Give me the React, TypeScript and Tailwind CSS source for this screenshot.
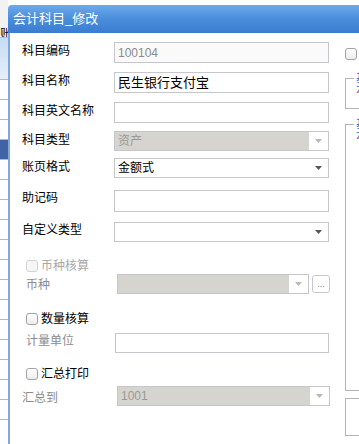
import type { ReactNode } from "react";

const font = { fontFamily: '"Liberation Sans","Noto Sans CJK SC",sans-serif' };

function Arrow({ disabled }: { disabled?: boolean }) {
  return (
    <div className="flex w-[19px] items-center justify-center bg-white">
      <svg width="7" height="4" viewBox="0 0 7 4">
        <path d="M0 0h7L3.5 4z" fill={disabled ? "#b8b8b8" : "#555"} />
      </svg>
    </div>
  );
}

function TextBox({ value, disabled, className = "h-[21px]" }: { value?: string; disabled?: boolean; className?: string }) {
  return (
    <div
      className={`flex items-center border border-[#c6c6ce] px-[3px] text-[12px] ${className} ${
        disabled ? "bg-[#fafafa] text-[#8a8a8a]" : "bg-white text-black"
      }`}
    >
      {value}
    </div>
  );
}

function Select({ value, disabled, className = "" }: { value?: string; disabled?: boolean; className?: string }) {
  return (
    <div className={`flex h-[20px] border border-[#c6c6ce] text-[12px] ${className}`}>
      <div
        className={`flex flex-1 items-center px-[3px] ${
          disabled ? "bg-[#d6d4cf] text-[#9a9a9a]" : "bg-white text-black"
        }`}
      >
        {value}
      </div>
      <Arrow disabled={disabled} />
    </div>
  );
}

function Check({ label, disabled }: { label: string; disabled?: boolean }) {
  return (
    <div className="flex h-[16px] items-center gap-[3px] pl-[16px]">
      <div
        className={`h-[12px] w-[12px] rounded-[3px] border ${
          disabled ? "border-[#d4d4d4] bg-[#f6f6f6]" : "border-[#a4a4a4] bg-gradient-to-b from-white to-[#ececec]"
        }`}
      />
      <span className={`text-[12px] ${disabled ? "text-[#a8a8a8]" : "text-black"}`}>{label}</span>
    </div>
  );
}

function Row({
  label,
  children,
  mt,
  lt = "pt-[1px]",
  gray,
  indent = "pl-[12px]",
}: {
  label: string;
  children: ReactNode;
  mt: string;
  lt?: string;
  gray?: boolean;
  indent?: string;
}) {
  return (
    <div className={`flex items-start ${mt}`}>
      <div
        className={`w-[104px] shrink-0 text-[12px] leading-[16px] ${indent} ${lt} ${
          gray ? "text-[#8c8c8c]" : "text-black"
        }`}
      >
        {label}
      </div>
      <div className="flex-1">{children}</div>
    </div>
  );
}

function Legend() {
  return <span className="absolute -top-[7px] left-[8px] bg-white px-[2px] text-[11px] leading-[12px] text-[#2b62b8]">基本</span>;
}

export default function App() {
  const rows = Array.from({ length: 13 });
  return (
    <div className="flex h-[444px] w-[359px] overflow-hidden bg-white" style={font}>
      {/* page behind the dialog */}
      <div className="flex w-[8px] shrink-0 flex-col">
        <div className="h-[28px] bg-[#f2f2f2]" />
        <div className="h-[10px] overflow-hidden border-b border-[#c0c0c0] text-[12px] leading-[12px] text-black">账</div>
        <div className="h-[42px] border-b border-[#b8b8b8] bg-gradient-to-b from-[#c7dcf5] to-[#e6effa]" />
        {[0, 1, 2, 3].map((i) => (
          <div key={i} className={`h-[20px] border-b border-[#b8b8b8] ${i === 3 ? "bg-[#3f63a6]" : "bg-white"}`} />
        ))}
        {rows.map((_, i) => (
          <div key={i} className="h-[20px] shrink-0 border-b border-[#b8b8b8] bg-white" />
        ))}
      </div>

      {/* dialog */}
      <div className="mt-[5px] flex flex-1 flex-col">
        <div className="flex h-[28px] items-center rounded-tl-[4px] bg-gradient-to-b from-[#6ea9ea] via-[#4a8ddc] to-[#3a7ccf] pl-[5px] text-[13px] text-white">
          会计科目_修改
        </div>
        <div className="flex flex-1 border-l-2 border-[#7ea7da] bg-white">
          <div className="w-[327px] shrink-0 pt-[9px]">
            <Row label="科目编码" mt="mt-0">
              <TextBox value="100104" disabled className="h-[21px] w-[215px]" />
            </Row>
            <Row label="科目名称" mt="mt-[9px]">
              <TextBox value="民生银行支付宝" className="h-[21px] w-[215px] text-[13px]" />
            </Row>
            <Row label="科目英文名称" mt="mt-[9px]">
              <TextBox className="h-[21px] w-[215px]" />
            </Row>
            <Row label="科目类型" mt="mt-[8px]">
              <Select value="资产" disabled className="w-[215px]" />
            </Row>
            <Row label="账页格式" mt="mt-[7px]">
              <Select value="金额式" className="w-[215px]" />
            </Row>
            <Row label="助记码" mt="mt-[12px]" lt="pt-0">
              <TextBox className="h-[22px] w-[215px]" />
            </Row>
            <Row label="自定义类型" mt="mt-[10px]" lt="pt-0">
              <Select className="w-[215px]" />
            </Row>
            <div className="mt-[16px]">
              <Check label="币种核算" disabled />
            </div>
            <Row label="币种" mt="mt-0" lt="pt-[3px]" gray indent="pl-[16px]">
              <div className="ml-[3px] flex items-center gap-[3px]">
                <Select disabled className="h-[19px] w-[192px]" />
                <div className="flex h-[18px] w-[18px] items-end justify-center rounded-[3px] border border-[#c6c6ce] bg-white pb-[3px] text-[9px] leading-[9px] text-[#777]">
                  ...
                </div>
              </div>
            </Row>
            <div className="mt-[17px]">
              <Check label="数量核算" />
            </div>
            <Row label="计量单位" mt="mt-[6px]" lt="pt-0" gray indent="pl-[16px]">
              <TextBox className="ml-px h-[20px] w-[214px]" />
            </Row>
            <div className="mt-[13px]">
              <Check label="汇总打印" />
            </div>
            <Row label="汇总到" mt="mt-[4px]" lt="pt-[4px]" gray>
              <div className="ml-[3px]">
                <Select value="1001" disabled className="w-[213px]" />
              </div>
            </Row>
          </div>

          {/* right column (clipped) */}
          <div className="flex flex-1 flex-col pt-[15px] pl-[8px]">
            <div className="h-[12px] w-[12px] rounded-[3px] border border-[#a4a4a4] bg-gradient-to-b from-white to-[#ececec]" />
            <div className="relative mt-[18px] h-[31px] border-y border-l border-[#b4b4b4]">
              <Legend />
            </div>
            <div className="relative mt-[15px] h-[267px] border-y border-l border-[#b4b4b4]">
              <Legend />
            </div>
            <div className="mt-[7px] h-[38px] border-y border-l border-[#b4b4b4]" />
          </div>
        </div>
      </div>
    </div>
  );
}
